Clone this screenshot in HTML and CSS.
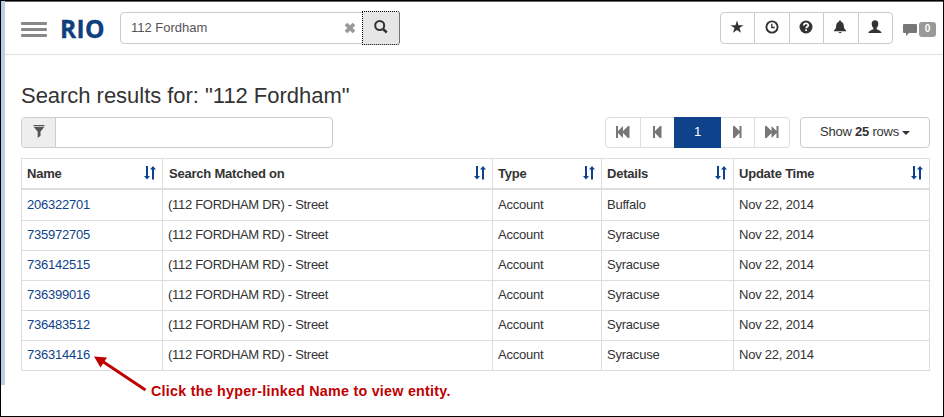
FILE: index.html
```html
<!DOCTYPE html>
<html lang="en">
<head>
<meta charset="utf-8">
<title>RIO</title>
<link rel="stylesheet" href="styles.css">
</head>
<body>
<svg width="0" height="0" class="defs">
  <symbol id="sort" viewBox="0 0 12 14"><path d="M2 0h2v10h2L3 13.500 0 10h2zM8 13.500V3.500H6L9 0l3 3.500h-2v10z"/></symbol>
</svg>
<div class="window">
  <div class="strip"></div>
  <div class="app">
    <header class="topbar">
      <div class="menu"><i></i><i></i><i></i></div>
      <div class="logo">RIO</div>
      <div class="search">
        <span class="query">112 Fordham</span>
        <svg class="clear" width="12" height="12" viewBox="0 0 12 12"><path d="M2 2l8 8M10 2l-8 8" stroke="#999" stroke-width="3.800"/></svg>
      </div>
      <div class="go"><svg width="14" height="14" viewBox="0 0 14 14" fill="none" stroke="#333"><circle cx="5.700" cy="5.500" r="4.500" stroke-width="2"/><path d="M9 9l3.800 3.500" stroke-width="2.400"/></svg></div>
      <nav class="tools">
        <span><svg width="14" height="14" viewBox="0 0 14 14"><path d="M7 .5l1.500 4.700h5L9.500 8l1.500 4.800L7 9.900l-4 2.900L4.500 8 .5 5.200h5z"/></svg></span>
        <span><svg width="14" height="14" viewBox="0 0 14 14"><circle cx="7" cy="7" r="5.600" fill="none" stroke="#333" stroke-width="1.900"/><path d="M6.800 3.800v3.700h3" fill="none" stroke="#333" stroke-width="1.300"/></svg></span>
        <span><svg width="14" height="14" viewBox="0 0 14 14"><circle cx="7" cy="7" r="6.500"/><path d="M4.800 5.500C4.800 2.700 9.300 2.800 9.300 5.200c0 1.500-2.200 1.500-2.200 3.100M7.100 9.300v1.800" fill="none" stroke="#fff" stroke-width="1.700"/></svg></span>
        <span><svg width="14" height="14" viewBox="0 0 14 14"><path d="M7 .5c.8 0 1.100.5 1.100 1.200 2.100.6 2.600 2.300 2.700 4.300.1 2.100.8 3.300 2.200 4.300v.9H1v-.9c1.400-1 2.100-2.200 2.200-4.300.1-2 .6-3.700 2.700-4.300C5.900 1 6.200.5 7 .5zM5.500 12h3c-.3 1.600-2.700 1.600-3 0z"/></svg></span>
        <span><svg width="14" height="14" viewBox="0 0 14 14"><path d="M7 .3c2.200 0 3.300 1.400 3.300 3.500 0 2-.8 3.400-1.700 4.200v1.200c1.700.8 4.700 1.500 5 3.900H.4c.3-2.400 3.300-3.100 5-3.900V8c-.9-.8-1.700-2.200-1.700-4.200C3.700 1.700 4.800.3 7 .3z"/></svg></span>
      </nav>
      <svg class="chat" width="14" height="12" viewBox="0 0 14 12"><path d="M1 0h12q1 0 1 1v7q0 1-1 1H6l-3 3V9H1Q0 9 0 8V1q0-1 1-1z" fill="#777"/></svg>
      <span class="badge">0</span>
    </header>
    <main>
      <h1>Search results for: "112 Fordham"</h1>
      <div class="controls">
        <div class="filter"><span><svg width="12" height="13" viewBox="0 0 12 13" fill="#555"><path d="M.5 0h11v1.200H.5zM.8 2h10.400L7.500 6.700v4L4.700 13V6.700z"/></svg></span></div>
        <div class="pager">
          <span><svg width="14" height="12" viewBox="0 0 14 12"><path d="M0 0h2v5l5-5v5l5-5h1.500v12H12L7 7v5L2 7v5H0z"/></svg></span>
          <span><svg width="9" height="12" viewBox="0 0 9 12"><path d="M0 0h2v5l5-5h1.500v12H7L2 7v5H0z"/></svg></span>
          <span class="current">1</span>
          <span><svg width="9" height="12" viewBox="0 0 9 12"><path d="M8.500 0h-2v5l-5-5H0v12h1.500l5-5v5h2z"/></svg></span>
          <span><svg width="14" height="12" viewBox="0 0 14 12"><path d="M13.500 0h-2v5l-5-5v5l-5-5H0v12h1.500l5-5v5l5-5v5h2z"/></svg></span>
        </div>
        <div class="rows">Show <b>25</b> rows<i></i></div>
      </div>
      <table>
        <colgroup><col class="c1"><col class="c2"><col class="c3"><col class="c4"><col class="c5"></colgroup>
        <thead><tr>
          <th><div>Name<svg><use href="#sort"/></svg></div></th>
          <th><div>Search Matched on<svg><use href="#sort"/></svg></div></th>
          <th><div>Type<svg><use href="#sort"/></svg></div></th>
          <th><div>Details<svg><use href="#sort"/></svg></div></th>
          <th><div>Update Time<svg><use href="#sort"/></svg></div></th>
        </tr></thead>
        <tbody>
          <tr><td><a>206322701</a></td><td>(112 FORDHAM DR) - Street</td><td>Account</td><td>Buffalo</td><td>Nov 22, 2014</td></tr>
          <tr><td><a>735972705</a></td><td>(112 FORDHAM RD) - Street</td><td>Account</td><td>Syracuse</td><td>Nov 22, 2014</td></tr>
          <tr><td><a>736142515</a></td><td>(112 FORDHAM RD) - Street</td><td>Account</td><td>Syracuse</td><td>Nov 22, 2014</td></tr>
          <tr><td><a>736399016</a></td><td>(112 FORDHAM RD) - Street</td><td>Account</td><td>Syracuse</td><td>Nov 22, 2014</td></tr>
          <tr><td><a>736483512</a></td><td>(112 FORDHAM RD) - Street</td><td>Account</td><td>Syracuse</td><td>Nov 22, 2014</td></tr>
          <tr><td><a>736314416</a></td><td>(112 FORDHAM RD) - Street</td><td>Account</td><td>Syracuse</td><td>Nov 22, 2014</td></tr>
        </tbody>
      </table>
    </main>
  </div>
  <svg class="arrow" width="54" height="36" viewBox="0 0 54 36"><path d="M8 5l43.500 29" stroke="#c00000" stroke-width="3"/><path d="M0 .5l13 1L6.500 11.500z" fill="#c00000"/></svg>
  <div class="callout">Click the hyper-linked Name to view entity.</div>
</div>
</body>
</html>
```
FILE: styles.css
```css
* { box-sizing: border-box; }
body { margin: 0; background: #fff; color: #333; font: 13px/18px "Liberation Sans", Arial, sans-serif; letter-spacing: -.22px; }
.defs { position: absolute; }
.window { position: relative; width: 944px; height: 417px; border: 1px solid #000; display: flex; overflow: hidden; }
.strip { width: 4px; height: 384px; background: #bdcee9; }
.app { flex: 1; border-top: 1px solid #666; }
.topbar { height: 53px; border-bottom: 1px solid #e0e0e0; display: flex; align-items: flex-start; padding: 10px 0 0 16px; }
.menu { width: 26px; margin-top: 10px; display: flex; flex-direction: column; gap: 3px; }
.menu i { height: 3px; background: #888; border-radius: 1px; }
.logo { width: 58px; margin: 3px 0 0 13px; font: bold 24.500px/28px "Open Sans", "Noto Sans", sans-serif; letter-spacing: .4px; color: #103f7d; -webkit-text-stroke: .4px #103f7d; white-space: nowrap; }
.search { width: 243px; height: 32px; margin-left: 2px; border: 1px solid #ccc; border-radius: 4px 0 0 4px; display: flex; align-items: center; justify-content: space-between; padding: 0 6px 1px 10px; color: #555; }
.query { letter-spacing: 0; }
.clear { margin-top: 1px; }
.go { width: 38px; height: 34px; margin: -1px 0 0 -1px; border: 1px dotted #000; border-radius: 0 3px 3px 0; background: #e6e6e6; display: flex; align-items: center; justify-content: center; padding-bottom: 3px; }
.tools { display: flex; width: 173px; height: 32px; margin-left: 320px; border: 1px solid #ccc; border-radius: 4px; fill: #333; }
.tools span { flex: 1; display: flex; align-items: center; justify-content: center; padding: 0 1px 3px 0; }
.tools span + span { border-left: 1px solid #ccc; }
.chat { margin: 12px 0 0 10px; }
.badge { width: 17px; height: 15px; margin: 10px 0 0 2px; background: #999; border-radius: 3px; color: #fff; font-weight: bold; font-size: 10px; line-height: 14px; text-align: center; }
main { padding: 27px 0 0 16px; width: 925px; }
h1 { margin: 0; font-size: 22px; line-height: 28px; font-weight: normal; letter-spacing: -.03px; white-space: nowrap; }
.controls { display: flex; height: 31px; margin-top: 7px; }
.filter { width: 312px; border: 1px solid #ccc; border-radius: 4px; display: flex; }
.filter span { width: 34px; border-right: 1px solid #ccc; background: #eee; border-radius: 3px 0 0 3px; display: flex; align-items: center; justify-content: center; padding-bottom: 3px; }
.pager { width: 185px; margin-left: 272px; display: flex; border: 1px solid #ddd; border-radius: 4px; fill: #777; }
.pager span { width: 34px; display: flex; align-items: center; justify-content: center; padding-bottom: 2px; border-right: 1px solid #ddd; }
.pager span:first-child { width: 35px; }
.pager span:last-child { border: 0; }
.pager .current { width: 47px; margin: -1px 0 -1px -1px; background: #0e428b; color: #fff; border: 0; }
.rows { width: 130px; margin-left: 10px; border: 1px solid #ccc; border-radius: 4px; display: flex; justify-content: center; line-height: 28px; white-space: pre; }
.rows i { margin: 13px 0 0 3px; height: 0; border: 4px solid transparent; border-top-color: #333; border-bottom: 0; }
table { width: 909px; margin-top: 10px; border-collapse: collapse; table-layout: fixed; }
.c1 { width: 141px; } .c2 { width: 330px; } .c3 { width: 109px; } .c4 { width: 132px; } .c5 { width: 196px; }
th, td { border: 1px solid #ddd; padding: 0 5px 1px; text-align: left; height: 30px; line-height: 26px; white-space: nowrap; }
th { border-bottom-width: 2px; height: 30px; padding: 1px 5px 0; }
tbody tr:first-child td { height: 32px; padding-bottom: 0; }
td:nth-child(2) { letter-spacing: -.29px; }
th:nth-child(2) { padding-left: 6px; }
th div { display: flex; justify-content: space-between; align-items: center; }
th svg { width: 12px; height: 14px; margin-top: -2px; position: relative; left: -1px; fill: #0e428b; }
a { color: #0e428b; }
.arrow { position: absolute; left: 93px; top: 355px; }
.callout { position: absolute; left: 150px; top: 381px; color: #c00000; font-weight: bold; font-size: 14.300px; letter-spacing: .25px; white-space: nowrap; }
```
